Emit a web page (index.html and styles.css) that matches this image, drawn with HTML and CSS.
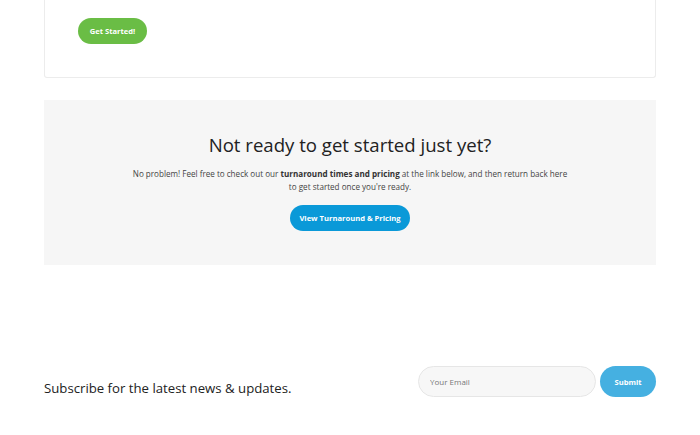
FILE: index.html
```html
<!DOCTYPE html>
<html>
<head>
    <link rel="stylesheet" href="styles.css">
</head>
<body>
    <div class="wrap">
        <div class="start-card">
            <a class="btn btn-green" href="#">Get Started!</a>
        </div>

        <div class="not-ready">
            <h2>Not ready to get started just yet?</h2>
            <p>No problem! Feel free to check out our <strong>turnaround times and pricing</strong> at the link below, and then return back here to get started once you're ready.</p>
            <a class="btn btn-blue" href="#">View Turnaround &amp; Pricing</a>
        </div>

        <div class="subscribe">
            <h3>Subscribe for the latest news &amp; updates.</h3>
            <form class="subscribe-form">
                <input type="email" placeholder="Your Email">
                <button type="button">Submit</button>
            </form>
        </div>
    </div>
</body>
</html>
```

FILE: styles.css
```css
body {
    font-family: "Open Sans", Arial, sans-serif;
    background: #fff;
    color: #333;
    margin: 0;
    padding: 0;
}
.wrap {
    width: 612px;
    margin: 0 auto;
}
.btn {
    display: inline-block;
    color: #fff;
    font-weight: 700;
    font-size: 7.6px;
    text-decoration: none;
    border-radius: 14px;
    text-align: center;
}
.start-card {
    border: 1px solid #ececec;
    border-top: none;
    border-radius: 0 0 3px 3px;
    padding: 17px 33px 33px;
}
.btn-green {
    background: #6abd45;
    width: 69px;
    height: 26px;
    line-height: 26px;
}
.not-ready {
    background: #f6f6f6;
    margin-top: 22px;
    height: 165px;
    box-sizing: border-box;
    padding-top: 32px;
    text-align: center;
}
.not-ready h2 {
    font-weight: 400;
    font-size: 18.6px;
    color: #222;
    margin: 0 0 9px;
    line-height: 26px;
}
.not-ready p {
    font-size: 8.1px;
    line-height: 13px;
    color: #444;
    width: 440px;
    margin: 0 auto 11px;
}
.not-ready strong {
    color: #333;
}
.btn-blue {
    background: #0a99d8;
    width: 120px;
    height: 26px;
    line-height: 26px;
}
.subscribe {
    margin-top: 101px;
    display: flex;
    align-items: center;
    justify-content: space-between;
}
.subscribe h3 {
    font-weight: 400;
    font-size: 13.2px;
    color: #222;
    margin: 12px 0 0;
}
.subscribe-form {
    display: flex;
    gap: 4px;
    margin: 0;
}
.subscribe-form input {
    width: 178px;
    height: 31px;
    box-sizing: border-box;
    border: 1px solid #e6e6e6;
    background: #f7f7f7;
    border-radius: 16px;
    padding: 0 11px;
    font-family: inherit;
    font-size: 8px;
    color: #555;
}
.subscribe-form input::placeholder {
    color: #777;
}
.subscribe-form button {
    width: 56px;
    height: 31px;
    border: none;
    border-radius: 16px;
    background: #45b0e1;
    color: #fff;
    font-family: inherit;
    font-weight: 700;
    font-size: 7.6px;
}
```
